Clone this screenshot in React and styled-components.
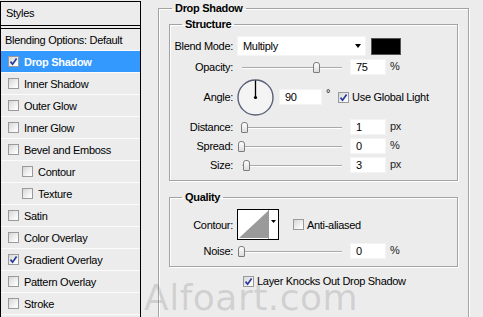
import React from "react";
import styled, { createGlobalStyle } from "styled-components";

const GlobalStyle = createGlobalStyle`
  html, body {
    margin: 0;
    padding: 0;
    background: #ececec;
  }
  body {
    font-family: "Liberation Sans", Arial, sans-serif;
    font-size: 11px;
    letter-spacing: -0.3px;
    color: #000;
  }
`;

const Window = styled.div`
  position: relative;
  width: 483px;
  height: 317px;
  overflow: hidden;
  display: flex;
  align-items: flex-start;
  background: #ececec;
`;

// ---- left style list ----
const StyleList = styled.div`
  flex-shrink: 0;
  width: 139px;
  height: 340px;
  margin-top: 1px;
  border: 1px solid #000;
  border-bottom: none;
`;

const ListHeader = styled.div`
  box-sizing: border-box;
  height: 23px;
  padding: 5px 0 0 5px;
  border-bottom: 4px double #000;
  box-sizing: content-box;
  height: 18px;
`;

const ListRow = styled.div`
  height: 21px;
  display: flex;
  align-items: center;
  gap: 5px;
  padding-left: ${(p) => (p.indent ? 21 : p.plain ? 4 : 7)}px;
  border-top: ${(p) => (p.first ? "none" : "1px solid #fbfbfb")};
  background: ${(p) => (p.active ? "#3399ff" : "transparent")};
  color: ${(p) => (p.active ? "#fff" : "#000")};
  font-weight: ${(p) => (p.active ? "bold" : "normal")};
`;

const Box = styled.span`
  box-sizing: border-box;
  width: 11px;
  height: 11px;
  flex-shrink: 0;
  display: inline-flex;
  align-items: center;
  justify-content: center;
  border: 1px solid #9a9a9a;
  background: linear-gradient(135deg, #d6d6d6, #fbfbfb 80%);
`;

const Check = ({ checked }) => (
  <Box>
    {checked && (
      <svg width="9" height="9" viewBox="0 0 9 9">
        <path d="M1.5 4.6 L3.6 7.2 L7.6 1.4" stroke="#27399a" strokeWidth="1.7" fill="none" />
      </svg>
    )}
  </Box>
);

// ---- right settings ----
const Settings = styled.div`
  margin: 2px 0 0 17px;
`;

const Group = styled.fieldset`
  box-sizing: border-box;
  width: ${(p) => p.width}px;
  margin: ${(p) => p.top || 0}px 0 0 0;
  padding: ${(p) => p.pad || "0 10px"};
  border: 1px solid #a3a3a3;
  box-shadow: 1px 1px 0 #fff, inset 1px 1px 0 #fff;
  min-height: ${(p) => p.minH || 0}px;
`;

const Legend = styled.legend`
  margin-left: ${(p) => p.offset || 12}px;
  padding: 0 3px;
  font-weight: bold;
  line-height: 13px;
`;

const Rows = styled.div`
  display: flex;
  flex-direction: column;
  gap: 3px;
`;

const FieldRow = styled.div`
  display: grid;
  grid-template-columns: 63px auto;
  column-gap: 4px;
  align-items: center;
  height: ${(p) => p.h}px;
`;

const Label = styled.span`
  text-align: right;
  white-space: nowrap;
`;

const Controls = styled.div`
  display: flex;
  align-items: center;
`;

const Select = styled.div`
  box-sizing: border-box;
  width: 129px;
  height: 20px;
  background: #fff;
  border: 1px solid #f4f4f4;
  display: flex;
  align-items: center;
  justify-content: space-between;
  padding: 0 4px 0 5px;
`;

const Arrow = styled.span`
  width: 0;
  height: 0;
  border-left: 3px solid transparent;
  border-right: 3px solid transparent;
  border-top: 4px solid #000;
`;

const Swatch = styled.div`
  box-sizing: border-box;
  width: 30px;
  height: 17px;
  margin-left: 5px;
  background: #000;
  border: 1px solid #555;
`;

const Track = styled.div`
  position: relative;
  width: 104px;
  height: 11px;
  margin-left: 1px;
  &::before {
    content: "";
    position: absolute;
    left: 4px;
    right: 0;
    top: 5px;
    height: 1px;
    background: #a9a9a9;
    box-shadow: 0 1px 0 #fff;
  }
`;

const Thumb = styled.span`
  position: absolute;
  top: 0;
  box-sizing: border-box;
  width: 7px;
  height: 11px;
  border: 1px solid #7c7c7c;
  border-radius: 3px 3px 1px 1px;
  background: linear-gradient(#ffffff, #dcdcdc);
`;

const Slider = ({ value }) => (
  <Track>
    <Thumb style={{ left: `${(value / 100) * 97}px` }} />
  </Track>
);

const NumberBox = styled.div`
  box-sizing: border-box;
  width: ${(p) => p.w || 36}px;
  height: 16px;
  margin-left: ${(p) => p.gap ?? 8}px;
  background: #fff;
  border: 1px solid #f4f4f4;
  padding-left: 5px;
  line-height: 14px;
`;

const Unit = styled.span`
  margin: 0 0 3px 4px;
  color: #222;
`;

const CheckLabel = styled.label`
  display: flex;
  align-items: center;
  gap: 3px;
  margin-left: ${(p) => p.gap || 0}px;
  white-space: nowrap;
`;

const Dial = () => (
  <svg width="37" height="37" viewBox="0 0 37 37">
    <circle cx="18.5" cy="18.5" r="17.5" fill="#f4f4f4" stroke="#5a6078" strokeWidth="1.4" />
    <line x1="18.5" y1="1.5" x2="18.5" y2="18.5" stroke="#000" strokeWidth="1.3" />
    <circle cx="18.5" cy="18.5" r="1.6" fill="#000" />
  </svg>
);

const ContourPicker = () => (
  <svg width="42" height="31" viewBox="0 0 42 31">
    <rect x="0.5" y="0.5" width="41" height="30" fill="#fff" stroke="#000" />
    <polygon points="2,29 31,2 31,29" fill="#9a9a9a" />
    <line x1="31.5" y1="1" x2="31.5" y2="30" stroke="#9a9a9a" />
    <polygon points="34,11 39,11 36.5,14" fill="#000" />
  </svg>
);

const Degree = styled.span`
  margin: 0 0 8px 4px;
`;

const Footer = styled.div`
  margin: 8px 0 0 74px;
  height: 12px;
  display: flex;
  align-items: center;
`;

const Watermark = styled.div`
  position: absolute;
  left: 144px;
  top: 277px;
  font-family: "DejaVu Sans", Verdana, sans-serif;
  font-size: 36px;
  letter-spacing: 0.5px;
  color: rgba(110, 110, 110, 0.22);
  pointer-events: none;
`;

const effects = [
  { label: "Drop Shadow", checked: true, active: true },
  { label: "Inner Shadow" },
  { label: "Outer Glow" },
  { label: "Inner Glow" },
  { label: "Bevel and Emboss" },
  { label: "Contour", indent: true },
  { label: "Texture", indent: true },
  { label: "Satin" },
  { label: "Color Overlay" },
  { label: "Gradient Overlay", checked: true },
  { label: "Pattern Overlay" },
  { label: "Stroke" },
];

const SliderRow = ({ label, value, pos, unit }) => (
  <FieldRow h={16}>
    <Label>{label}</Label>
    <Controls>
      <Slider value={pos} />
      <NumberBox>{value}</NumberBox>
      <Unit>{unit}</Unit>
    </Controls>
  </FieldRow>
);

export default function App() {
  return (
    <Window>
      <GlobalStyle />
      <StyleList>
        <ListHeader>Styles</ListHeader>
        <ListRow first plain>Blending Options: Default</ListRow>
        {effects.map((e) => (
          <ListRow key={e.label} active={e.active} indent={e.indent}>
            <Check checked={e.checked} />
            {e.label}
          </ListRow>
        ))}
        <ListRow />
      </StyleList>

      <Settings>
        <Group width={311} minH={340}>
          <Legend offset={3}>Drop Shadow</Legend>

          <Group width={289} top={3} pad="5px 0 7px 0">
            <Legend offset={12}>Structure</Legend>
            <Rows>
              <FieldRow h={20}>
                <Label>Blend Mode:</Label>
                <Controls>
                  <Select>
                    Multiply
                    <Arrow />
                  </Select>
                  <Swatch />
                </Controls>
              </FieldRow>
              <SliderRow label="Opacity:" value="75" pos={77} unit="%" />
              <FieldRow h={38}>
                <Label>Angle:</Label>
                <Controls>
                  <Dial />
                  <NumberBox w={43} gap={5}>90</NumberBox>
                  <Degree>°</Degree>
                  <CheckLabel gap={8}>
                    <Check checked />
                    Use Global Light
                  </CheckLabel>
                </Controls>
              </FieldRow>
              <SliderRow label="Distance:" value="1" pos={3} unit="px" />
              <SliderRow label="Spread:" value="0" pos={0} unit="%" />
              <SliderRow label="Size:" value="3" pos={5} unit="px" />
            </Rows>
          </Group>

          <Group width={289} top={10} pad="5px 0 7px 0">
            <Legend offset={12}>Quality</Legend>
            <Rows>
              <FieldRow h={31}>
                <Label>Contour:</Label>
                <Controls>
                  <ContourPicker />
                  <CheckLabel gap={14}>
                    <Check />
                    Anti-aliased
                  </CheckLabel>
                </Controls>
              </FieldRow>
              <SliderRow label="Noise:" value="0" pos={0} unit="%" />
            </Rows>
          </Group>

          <Footer>
            <CheckLabel>
              <Check checked />
              Layer Knocks Out Drop Shadow
            </CheckLabel>
          </Footer>
        </Group>
      </Settings>

      <Watermark>Alfoart.com</Watermark>
    </Window>
  );
}
